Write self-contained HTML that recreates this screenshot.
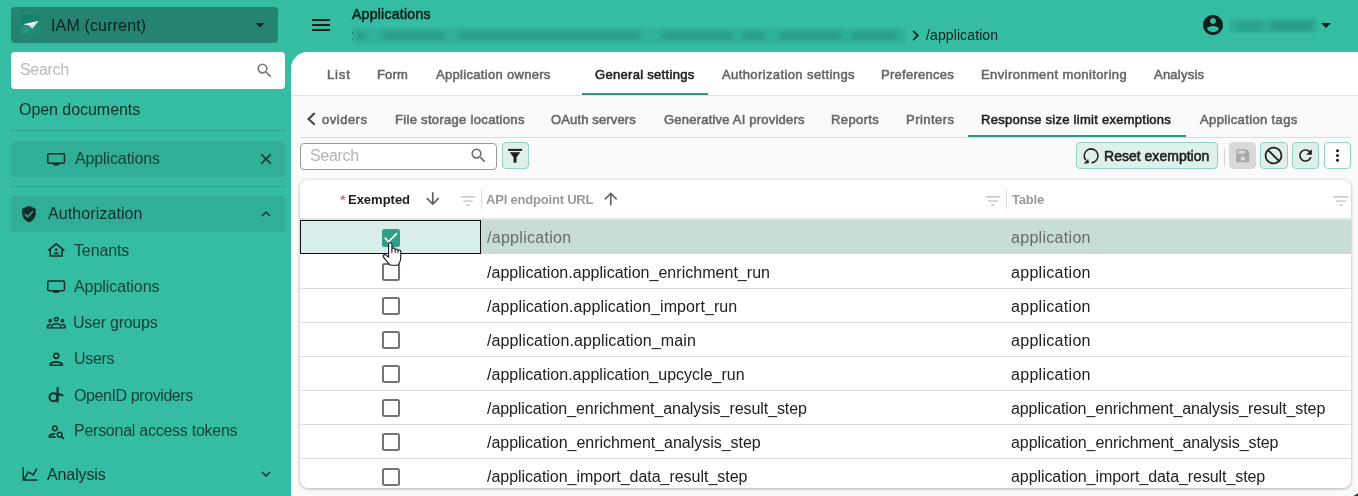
<!DOCTYPE html>
<html><head><meta charset="utf-8"><title>Applications</title>
<style>
html,body{margin:0;padding:0}
body{width:1358px;height:496px;overflow:hidden;position:relative;background:#35bda4;font-family:"Liberation Sans", sans-serif}
.t{position:absolute;white-space:pre;font-family:"Liberation Sans", sans-serif;will-change:transform}
.i{position:absolute;display:block}
.abs{position:absolute}
.iam{position:absolute;left:11px;top:7px;width:267px;height:36px;border-radius:4px;background:#248471}
.sb{position:absolute;left:11px;top:52px;width:274px;height:37px;border-radius:4px;background:#fff}
.dv{position:absolute;left:11px;width:274px;height:1px;background:#2ea08b}
.hl{position:absolute;left:11px;width:274px;background:#30ae98}
.main{position:absolute;left:291px;top:52px;width:1067px;height:444px;background:#fafafa;border-top-left-radius:17px;overflow:hidden}
.tabs{position:absolute;left:0;top:0;width:100%;height:43px;background:#fff;border-bottom:1px solid #e2e2e2}
.ul{position:absolute;height:2px;background:#2a9a85}
.card{position:absolute;left:300px;top:180px;width:1051px;height:308px;background:#fff;border-radius:8px;box-shadow:0 1px 3px rgba(0,0,0,.24),0 0 4px rgba(0,0,0,.1);overflow:hidden}
.rb{position:absolute;left:0;width:100%;height:1px;background:#dedede}
.cb{position:absolute;left:382px;width:14px;height:14px;border:2px solid #747474;border-radius:2.500px;background:#fff}
.btn{position:absolute;top:142.100px;height:24.700px;border:1px solid #8fd1c3;border-radius:4px;background:#dff0ec}
</style></head><body>
<div class="iam"></div>
<svg class="i" style="left:21.300px;top:15.200px" width="19.200" height="19.200" viewBox="0 0 19.200 19.200"><defs><linearGradient id="lg" x1="0" y1="0" x2="0.300" y2="1"><stop offset="0" stop-color="#117c6b"/><stop offset="1" stop-color="#1b8f7e"/></linearGradient></defs><rect width="19.200" height="19.200" rx="1.500" fill="url(#lg)"/><path d="M0 10.800 0 17.700Q0 19.200 1.500 19.200L3 19.200 12.600 12.200 8.200 10.600z" fill="#fff" fill-opacity=".07"/><path d="M2.400 9.200 17.400 6 11.300 13.400 8.200 10.600z" fill="#fff"/><path d="M8.200 10.600 17.400 6 11.300 13.400z" fill="#dcdfdf"/><path d="M2.400 9.200 8.200 10.600 9.500 9.700z" fill="#e6d6d6"/></svg>
<div class="sb"></div>
<div class="dv" style="top:130px"></div>
<div class="hl" style="top:141px;height:36px;border-radius:4px"></div>
<div class="dv" style="top:186px"></div>
<div class="hl" style="top:196px;height:35.500px;border-radius:4px 4px 0 0"></div>
<div class="abs" style="left:352.800px;top:25.500px;width:553.200px;height:20px;overflow:hidden"><div class="abs" style="left:-8px;top:2px;width:570px;height:16px;background:#30b19a;filter:blur(1.500px)"></div><div class="abs" style="left:4.2px;top:6.500px;width:8px;height:7px;background:#279a85;filter:blur(2.500px)"></div><div class="abs" style="left:30.2px;top:6.500px;width:62px;height:7px;background:#279a85;filter:blur(2.500px)"></div><div class="abs" style="left:105.2px;top:6.500px;width:182px;height:7px;background:#279a85;filter:blur(2.500px)"></div><div class="abs" style="left:309.2px;top:6.500px;width:71px;height:7px;background:#279a85;filter:blur(2.500px)"></div><div class="abs" style="left:390.2px;top:6.500px;width:22px;height:7px;background:#279a85;filter:blur(2.500px)"></div><div class="abs" style="left:426.2px;top:6.500px;width:63px;height:7px;background:#279a85;filter:blur(2.500px)"></div><div class="abs" style="left:498.2px;top:6.500px;width:46px;height:7px;background:#279a85;filter:blur(2.500px)"></div></div>
<div class="abs" style="left:352px;top:32px;width:1.200px;height:1.600px;background:#1f6b5c"></div><div class="abs" style="left:352px;top:37.500px;width:1.200px;height:1.600px;background:#1f6b5c"></div>
<div class="abs" style="left:1229px;top:17px;width:87.500px;height:17px;overflow:hidden"><div class="abs" style="left:-8px;top:2px;width:104px;height:13px;background:#30b19a;filter:blur(1.500px)"></div><div class="abs" style="left:5px;top:3.500px;width:30px;height:10px;background:#2ba38d;filter:blur(2.500px)"></div><div class="abs" style="left:41px;top:3.500px;width:42px;height:10px;background:#289b86;filter:blur(2.500px)"></div></div>
<div class="main">
  <div class="tabs"></div>
</div>
<div class="ul" style="left:582px;top:93px;width:126px"></div>
<div class="abs" style="left:300px;top:137px;width:1051px;height:1px;background:#dcdcdc"></div>
<div class="ul" style="left:968px;top:135px;width:218px"></div>
<div class="abs" style="left:300px;top:143px;width:195px;height:25px;border:1px solid #999;border-radius:4px;background:#fff"></div>
<div class="btn" style="left:502px;width:25px"></div>
<div class="btn" style="left:1076px;width:139.500px"></div>
<div class="abs" style="left:1223.500px;top:148px;width:1px;height:18px;background:#d4d4d4"></div>
<div class="btn" style="left:1229.300px;width:24.500px;background:#d9d9d9;border-color:#d9d9d9"></div>
<div class="btn" style="left:1260.100px;width:25.500px"></div>
<div class="btn" style="left:1292.300px;width:25px"></div>
<div class="btn" style="left:1324.300px;width:24.500px;background:#fff"></div>
<div class="card">
  <div class="abs" style="left:0;top:38px;width:100%;height:2.300px;background:#e4e4e4"></div>
  <div class="abs" style="left:0;top:40.300px;width:100%;height:33.900px;background:#c8ddd7"></div>
  <div class="abs" style="left:0;top:40.300px;width:179px;height:31.900px;background:#d9eeea;border:1px solid #111"></div>
  <div class="abs" style="left:181px;top:9px;width:1px;height:20px;background:#dcdcdc"></div>
  <div class="abs" style="left:706px;top:9px;width:1px;height:20px;background:#dcdcdc"></div>
  <div class="rb" style="top:107.8px"></div><div class="rb" style="top:141.9px"></div><div class="rb" style="top:176.0px"></div><div class="rb" style="top:210.1px"></div><div class="rb" style="top:244.1px"></div><div class="rb" style="top:278.2px"></div><div class="rb" style="top:312.3px"></div>
</div>
<div class="cb" style="top:263.1px"></div><div class="cb" style="top:297.2px"></div><div class="cb" style="top:331.2px"></div><div class="cb" style="top:365.4px"></div><div class="cb" style="top:399.4px"></div><div class="cb" style="top:433.4px"></div><div class="cb" style="top:467.6px"></div>
<div class="abs" style="left:382px;top:229px;width:18px;height:18px;border-radius:2.500px;background:#2f9f88"></div>
<svg class="i" style="left:382px;top:229px" width="18" height="18" viewBox="0 0 18 18"><path d="M2.700 8.700 6.600 12.600 15.100 4.200" fill="none" stroke="#fff" stroke-width="1.700"/></svg>
<svg class="i" style="left:250.2px;top:14.8px" width="20" height="20" viewBox="0 0 24 24" fill="#0b1f1b" ><path d="M7 10l5 5 5-5z"/></svg><svg class="i" style="left:255px;top:60.5px" width="19" height="19" viewBox="0 0 24 24" fill="#7a7a7a" ><path d="M15.5 14h-.79l-.28-.27A6.471 6.471 0 0 0 16 9.5 6.5 6.5 0 1 0 9.5 16c1.61 0 3.09-.59 4.23-1.57l.27.28v.79l5 4.99L20.49 19l-4.99-5zm-6 0C7.01 14 5 11.99 5 9.5S7.01 5 9.5 5 14 7.01 14 9.5 11.99 14 9.5 14z"/></svg><svg class="i" style="left:44px;top:147px" width="24" height="24" viewBox="44 147 24 24"><rect x="47.750" y="153.75" width="16.700" height="9.600" rx="1.300" fill="none" stroke="#0f2e28" stroke-width="1.500"/><rect x="53.300" y="163.60" width="5.800" height="1.900" fill="#0f2e28"/></svg><svg class="i" style="left:257px;top:150px" width="18" height="18" viewBox="0 0 24 24" fill="#0f2e28" ><path d="M19 6.41L17.59 5 12 10.59 6.41 5 5 6.41 10.59 12 5 17.59 6.41 19 12 13.41 17.59 19 19 17.59 13.41 12z"/></svg><svg class="i" style="left:20px;top:204.5px" width="18" height="18" viewBox="0 0 24 24" fill="#0f2e28" ><path d="M12 1L3 5v6c0 5.55 3.84 10.74 9 12 5.16-1.26 9-6.45 9-12V5l-9-4zm-2 16l-4-4 1.41-1.41L10 14.17l6.59-6.59L18 9l-8 8z"/></svg><svg class="i" style="left:257px;top:205px" width="18" height="18" viewBox="0 0 24 24" fill="#0f2e28" ><path d="M12 8l-6 6 1.41 1.41L12 10.83l4.59 4.58L18 14z"/></svg><svg class="i" style="left:44px;top:274px" width="24" height="24" viewBox="44 274 24 24"><rect x="47.750" y="281.05" width="16.700" height="9.600" rx="1.300" fill="none" stroke="#0f2e28" stroke-width="1.500"/><rect x="53.300" y="290.90" width="5.800" height="1.900" fill="#0f2e28"/></svg><svg class="i" style="left:44px;top:310px" width="24" height="24" viewBox="44 310 24 24"><g fill="none" stroke="#0f2e28" stroke-width="1.400"><circle cx="56.300" cy="319.300" r="1.800"/><circle cx="50.200" cy="320.700" r="1.150"/><circle cx="62.400" cy="320.700" r="1.150"/><path d="M51.700 327.900v-1.300c0-1.900 2.700-2.900 4.600-2.900s4.600 1 4.600 2.900v1.300z"/><path d="M51.700 327.900h-4.300v-1.200c0-1.300 1.500-2.200 3.400-2.200M60.900 327.900h4.300v-1.200c0-1.300-1.500-2.200-3.400-2.200"/></g></svg><svg class="i" style="left:46px;top:348.8px" width="20.5" height="20.5" viewBox="0 0 24 24" fill="#0f2e28" ><path d="M12 6c1.1 0 2 .9 2 2s-.9 2-2 2-2-.9-2-2 .9-2 2-2m0 10c2.7 0 5.8 1.29 6 2H6c.23-.72 3.31-2 6-2m0-12C9.79 4 8 5.79 8 8s1.79 4 4 4 4-1.79 4-4-1.79-4-4-4zm0 10c-2.67 0-8 1.34-8 4v2h16v-2c0-2.66-5.33-4-8-4z"/></svg><svg class="i" style="left:46.5px;top:422px" width="19" height="19" viewBox="0 0 24 24" fill="#0f2e28" ><path d="M10 12c2.21 0 4-1.79 4-4s-1.79-4-4-4-4 1.79-4 4 1.79 4 4 4zm0-6c1.1 0 2 .9 2 2s-.9 2-2 2-2-.9-2-2 .9-2 2-2zM4 18c.22-.72 3.31-2 6-2 0-.7.13-1.37.35-1.99C7.62 13.91 2 15.27 2 18v2h9.54c-.52-.58-.93-1.25-1.19-2H4zm15.43.02c.36-.59.57-1.28.57-2.02 0-2.21-1.79-4-4-4s-4 1.79-4 4 1.79 4 4 4c.74 0 1.43-.22 2.02-.57L20.59 22 22 20.59c-1.5-1.5-.79-.8-2.57-2.57zM16 18c-1.1 0-2-.9-2-2s.9-2 2-2 2 .9 2 2-.9 2-2 2z"/></svg><svg class="i" style="left:20.5px;top:464.5px" width="18" height="18" viewBox="0 0 24 24" fill="#0f2e28" ><path d="M16,11.78L20.24,4.45L21.97,5.45L16.74,14.5L10.23,10.75L5.46,19H22V21H2V3H4V17.54L9.5,8L16,11.78Z"/></svg><svg class="i" style="left:257px;top:465px" width="18" height="18" viewBox="0 0 24 24" fill="#0f2e28" ><path d="M16.59 8.59L12 13.17 7.41 8.59 6 10l6 6 6-6z"/></svg><svg class="i" style="left:44px;top:238px" width="24" height="24" viewBox="44 238 24 24"><g fill="none" stroke="#0f2e28" stroke-width="1.500"><path d="M48 250.600 56.200 243.800 64.400 250.600M50.300 249v6.900h11.800v-6.900"/></g><circle cx="56.200" cy="249.700" r="1.350" fill="#0f2e28"/><path d="M53.600 254.200c0-1.500 1.500-2 2.600-2s2.600.5 2.600 2z" fill="#0f2e28"/></svg><svg class="i" style="left:44px;top:383px" width="24" height="24" viewBox="44 383 24 24"><g fill="none" stroke="#0f2e28" stroke-width="2"><circle cx="53.500" cy="397.300" r="4"/><path d="M57.600 387.300v15.100M58.300 394l5 1.600" stroke-width="2.100"/></g></svg><svg class="i" style="left:309px;top:13px" width="24" height="24" viewBox="0 0 24 24" fill="#0b1f1b" ><path d="M3 18h18v-2H3v2zm0-5h18v-2H3v2zm0-7v2h18V6H3z"/></svg><svg class="i" style="left:1201px;top:13px" width="24" height="24" viewBox="0 0 24 24" fill="#0b1f1b" ><path d="M12 2C6.48 2 2 6.48 2 12s4.48 10 10 10 10-4.48 10-10S17.52 2 12 2zm0 3c1.66 0 3 1.34 3 3s-1.34 3-3 3-3-1.34-3-3 1.34-3 3-3zm0 14.2c-2.5 0-4.71-1.28-6-3.22.03-1.99 4-3.08 6-3.08 1.99 0 5.97 1.09 6 3.08-1.29 1.94-3.5 3.22-6 3.22z"/></svg><svg class="i" style="left:1314px;top:13px" width="24" height="24" viewBox="0 0 24 24" fill="#0b1f1b" ><path d="M7 10l5 5 5-5z"/></svg><svg class="i" style="left:905px;top:25px" width="21" height="21" viewBox="0 0 24 24" fill="#0b1f1b" ><path d="M10 6L8.59 7.41 13.17 12l-4.58 4.59L10 18l6-6z"/></svg><svg class="i" style="left:304px;top:110px" width="16" height="18" viewBox="304 110 16 18"><path d="M314.700 113.100 308.600 118.900 314.700 124.700" fill="none" stroke="#444" stroke-width="2.100"/></svg><svg class="i" style="left:468.5px;top:146.1px" width="19" height="19" viewBox="0 0 24 24" fill="#6e6e6e" ><path d="M15.5 14h-.79l-.28-.27A6.471 6.471 0 0 0 16 9.5 6.5 6.5 0 1 0 9.5 16c1.61 0 3.09-.59 4.23-1.57l.27.28v.79l5 4.99L20.49 19l-4.99-5zm-6 0C7.01 14 5 11.99 5 9.5S7.01 5 9.5 5 14 7.01 14 9.5 11.99 14 9.5 14z"/></svg><svg class="i" style="left:504px;top:144px" width="24" height="24" viewBox="504 144 24 24"><rect x="508.100" y="148.900" width="14" height="2" fill="#1d1d1d"/><path d="M509.700 152.200H520.300L516.500 157.300V162.700H513.600V157.300Z" fill="#1d1d1d"/></svg><svg class="i" style="left:1233.5px;top:147px" width="17.5" height="17.5" viewBox="0 0 24 24" fill="#a9a9a9" ><path d="M17 3H5c-1.11 0-2 .9-2 2v14c0 1.1.89 2 2 2h14c1.1 0 2-.9 2-2V7l-4-4zm-5 16c-1.66 0-3-1.34-3-3s1.34-3 3-3 3 1.34 3 3-1.34 3-3 3zm3-10H5V5h10v4z"/></svg><svg class="i" style="left:1263.3px;top:145.3px" width="21" height="21" viewBox="0 0 24 24" fill="#1d1d1d" transform="scale(-1 1)"><path d="M12 2C6.48 2 2 6.48 2 12s4.48 10 10 10 10-4.48 10-10S17.52 2 12 2zM4 12c0-4.42 3.58-8 8-8 1.85 0 3.55.63 4.9 1.69L5.69 16.9C4.63 15.55 4 13.85 4 12zm8 8c-1.85 0-3.55-.63-4.9-1.69L18.31 7.1C19.37 8.45 20 10.15 20 12c0 4.42-3.58 8-8 8z"/></svg><svg class="i" style="left:1296.3px;top:146.3px" width="19" height="19" viewBox="0 0 24 24" fill="#1d1d1d" ><path d="M17.65 6.35C16.2 4.9 14.21 4 12 4c-4.42 0-7.99 3.58-7.99 8s3.57 8 7.99 8c3.73 0 6.84-2.55 7.73-6h-2.08c-.82 2.33-3.04 4-5.65 4-3.31 0-6-2.69-6-6s2.69-6 6-6c1.66 0 3.14.69 4.22 1.78L13 11h7V4l-2.35 2.35z"/></svg><svg class="i" style="left:1328px;top:146.3px" width="19" height="19" viewBox="0 0 24 24" fill="#1d1d1d" ><path d="M12 8c1.1 0 2-.9 2-2s-.9-2-2-2-2 .9-2 2 .9 2 2 2zm0 2c-1.1 0-2 .9-2 2s.9 2 2 2 2-.9 2-2-.9-2-2-2zm0 6c-1.1 0-2 .9-2 2s.9 2 2 2 2-.9 2-2-.9-2-2-2z"/></svg><svg class="i" style="left:1080px;top:144px" width="24" height="24" viewBox="1080 144 24 24"><path d="M1091.500 162.700A6.900 6.900 0 1 0 1085.800 160.200" fill="none" stroke="#1d1d1d" stroke-width="1.500"/><path d="M1083.600 163.700 1088.900 163.100 1088.300 158.700z" fill="#1d1d1d"/></svg><svg class="i" style="left:423.2px;top:188.9px" width="19.5" height="19.5" viewBox="0 0 24 24" fill="#5e5e5e" ><path d="M20 12l-1.41-1.41L13 16.17V4h-2v12.17l-5.58-5.59L4 12l8 8 8-8z"/></svg><svg class="i" style="left:457.85px;top:190.65px" width="20" height="20" viewBox="0 0 24 24" fill="#cdcdcd" ><path d="M10 18h4v-2h-4v2zM3 6v2h18V6H3zm3 7h12v-2H6v2z"/></svg><svg class="i" style="left:600.5px;top:189.2px" width="19.5" height="19.5" viewBox="0 0 24 24" fill="#5e5e5e" ><path d="M4 12l1.41 1.41L11 7.83V20h2V7.83l5.58 5.59L20 12l-8-8-8 8z"/></svg><svg class="i" style="left:983.4px;top:190.65px" width="20" height="20" viewBox="0 0 24 24" fill="#cdcdcd" ><path d="M10 18h4v-2h-4v2zM3 6v2h18V6H3zm3 7h12v-2H6v2z"/></svg><svg class="i" style="left:1331.2px;top:190.65px" width="20" height="20" viewBox="0 0 24 24" fill="#cdcdcd" ><path d="M10 18h4v-2h-4v2zM3 6v2h18V6H3zm3 7h12v-2H6v2z"/></svg>
<span class="t" style="left:50.90px;top:16.26px;font-size:16px;line-height:20px;letter-spacing:0.150px;color:#0b1f1b">IAM (current)</span>
<span class="t" style="left:20.00px;top:60.06px;font-size:16px;line-height:20px;letter-spacing:-0.300px;color:#b9b9b9">Search</span>
<span class="t" style="left:19.30px;top:100.16px;font-size:16px;line-height:20px;letter-spacing:-0.046px;color:#0f2e28">Open documents</span>
<span class="t" style="left:74.70px;top:149.46px;font-size:16px;line-height:20px;letter-spacing:-0.118px;color:#163e36">Applications</span>
<span class="t" style="left:47.50px;top:204.46px;font-size:16px;line-height:20px;letter-spacing:0.092px;color:#0f2e28">Authorization</span>
<span class="t" style="left:74.10px;top:240.76px;font-size:16px;line-height:20px;letter-spacing:-0.133px;color:#163e36">Tenants</span>
<span class="t" style="left:74.10px;top:277.06px;font-size:16px;line-height:20px;letter-spacing:-0.073px;color:#163e36">Applications</span>
<span class="t" style="left:73.10px;top:312.86px;font-size:16px;line-height:20px;letter-spacing:-0.250px;color:#163e36">User groups</span>
<span class="t" style="left:73.50px;top:348.96px;font-size:16px;line-height:20px;letter-spacing:-0.325px;color:#163e36">Users</span>
<span class="t" style="left:73.50px;top:385.76px;font-size:16px;line-height:20px;letter-spacing:-0.407px;color:#163e36">OpenID providers</span>
<span class="t" style="left:73.50px;top:421.36px;font-size:16px;line-height:20px;letter-spacing:-0.257px;color:#163e36">Personal access tokens</span>
<span class="t" style="left:47.10px;top:464.76px;font-size:16px;line-height:20px;letter-spacing:-0.114px;color:#0f2e28">Analysis</span>
<span class="t" style="left:352.07px;top:4.95px;font-size:14px;line-height:18px;letter-spacing:0.268px;color:#0b1f1b;-webkit-text-stroke:0.55px #0b1f1b">Applications</span>
<span class="t" style="left:925.80px;top:25.95px;font-size:14px;line-height:18px;letter-spacing:0.109px;color:#0b1f1b">/application</span>
<span class="t" style="left:326.77px;top:65.90px;font-size:13px;line-height:17px;letter-spacing:0.850px;color:#666666;-webkit-text-stroke:0.55px #666666">List</span>
<span class="t" style="left:376.67px;top:65.90px;font-size:13px;line-height:17px;letter-spacing:0.183px;color:#666666;-webkit-text-stroke:0.55px #666666">Form</span>
<span class="t" style="left:435.88px;top:65.90px;font-size:13px;line-height:17px;letter-spacing:0.309px;color:#666666;-webkit-text-stroke:0.55px #666666">Application owners</span>
<span class="t" style="left:595.17px;top:65.90px;font-size:13px;line-height:17px;letter-spacing:0.303px;color:#212121;-webkit-text-stroke:0.55px #212121">General settings</span>
<span class="t" style="left:721.88px;top:65.90px;font-size:13px;line-height:17px;letter-spacing:0.393px;color:#666666;-webkit-text-stroke:0.55px #666666">Authorization settings</span>
<span class="t" style="left:881.27px;top:65.90px;font-size:13px;line-height:17px;letter-spacing:0.275px;color:#666666;-webkit-text-stroke:0.55px #666666">Preferences</span>
<span class="t" style="left:981.48px;top:65.90px;font-size:13px;line-height:17px;letter-spacing:0.402px;color:#666666;-webkit-text-stroke:0.55px #666666">Environment monitoring</span>
<span class="t" style="left:1154.28px;top:65.90px;font-size:13px;line-height:17px;letter-spacing:0.236px;color:#666666;-webkit-text-stroke:0.55px #666666">Analysis</span>
<span class="t" style="left:321.97px;top:110.70px;font-size:13px;line-height:17px;letter-spacing:0.508px;color:#666666;-webkit-text-stroke:0.55px #666666">oviders</span>
<span class="t" style="left:394.88px;top:110.70px;font-size:13px;line-height:17px;letter-spacing:0.312px;color:#666666;-webkit-text-stroke:0.55px #666666">File storage locations</span>
<span class="t" style="left:551.38px;top:110.70px;font-size:13px;line-height:17px;letter-spacing:0.137px;color:#666666;-webkit-text-stroke:0.55px #666666">OAuth servers</span>
<span class="t" style="left:664.07px;top:110.70px;font-size:13px;line-height:17px;letter-spacing:0.211px;color:#666666;-webkit-text-stroke:0.55px #666666">Generative AI providers</span>
<span class="t" style="left:831.38px;top:110.70px;font-size:13px;line-height:17px;letter-spacing:0.392px;color:#666666;-webkit-text-stroke:0.55px #666666">Reports</span>
<span class="t" style="left:905.88px;top:110.70px;font-size:13px;line-height:17px;letter-spacing:0.464px;color:#666666;-webkit-text-stroke:0.55px #666666">Printers</span>
<span class="t" style="left:981.27px;top:110.70px;font-size:13px;line-height:17px;letter-spacing:0.267px;color:#212121;-webkit-text-stroke:0.55px #212121">Response size limit exemptions</span>
<span class="t" style="left:1199.88px;top:110.70px;font-size:13px;line-height:17px;letter-spacing:0.363px;color:#666666;-webkit-text-stroke:0.55px #666666">Application tags</span>
<span class="t" style="left:310.00px;top:146.16px;font-size:16px;line-height:20px;letter-spacing:-0.300px;color:#b4b4b4">Search</span>
<span class="t" style="left:1103.68px;top:146.95px;font-size:14px;line-height:18px;letter-spacing:0.018px;color:#1d1d1d;-webkit-text-stroke:0.55px #1d1d1d">Reset exemption</span>
<span class="t" style="left:339.90px;top:190.30px;font-size:15px;line-height:19px;letter-spacing:0.000px;color:#e53935">*</span>
<span class="t" style="left:348.10px;top:190.60px;font-size:13px;line-height:17px;letter-spacing:-0.014px;color:#1d1d1d;font-weight:bold">Exempted</span>
<span class="t" style="left:486.20px;top:190.60px;font-size:13px;line-height:17px;letter-spacing:-0.200px;color:#9a9a9a;font-weight:bold">API endpoint URL</span>
<span class="t" style="left:1012.40px;top:190.60px;font-size:13px;line-height:17px;letter-spacing:-0.200px;color:#9a9a9a;font-weight:bold">Table</span>
<span class="t" style="left:487.00px;top:228.16px;font-size:16px;line-height:20px;letter-spacing:0.291px;color:#666c6a">/application</span>
<span class="t" style="left:1011.40px;top:228.16px;font-size:16px;line-height:20px;letter-spacing:0.300px;color:#666c6a">application</span>
<span class="t" style="left:487.00px;top:262.76px;font-size:16px;line-height:20px;letter-spacing:0.026px;color:#212121">/application.application_enrichment_run</span>
<span class="t" style="left:1011.40px;top:262.76px;font-size:16px;line-height:20px;letter-spacing:0.300px;color:#212121">application</span>
<span class="t" style="left:487.00px;top:296.96px;font-size:16px;line-height:20px;letter-spacing:0.088px;color:#212121">/application.application_import_run</span>
<span class="t" style="left:1011.40px;top:296.96px;font-size:16px;line-height:20px;letter-spacing:0.300px;color:#212121">application</span>
<span class="t" style="left:487.00px;top:331.06px;font-size:16px;line-height:20px;letter-spacing:0.121px;color:#212121">/application.application_main</span>
<span class="t" style="left:1011.40px;top:331.06px;font-size:16px;line-height:20px;letter-spacing:0.300px;color:#212121">application</span>
<span class="t" style="left:487.00px;top:365.16px;font-size:16px;line-height:20px;letter-spacing:0.017px;color:#212121">/application.application_upcycle_run</span>
<span class="t" style="left:1011.40px;top:365.16px;font-size:16px;line-height:20px;letter-spacing:0.300px;color:#212121">application</span>
<span class="t" style="left:487.00px;top:399.26px;font-size:16px;line-height:20px;letter-spacing:-0.067px;color:#212121">/application_enrichment_analysis_result_step</span>
<span class="t" style="left:1011.40px;top:399.26px;font-size:16px;line-height:20px;letter-spacing:-0.098px;color:#212121">application_enrichment_analysis_result_step</span>
<span class="t" style="left:487.00px;top:433.46px;font-size:16px;line-height:20px;letter-spacing:-0.033px;color:#212121">/application_enrichment_analysis_step</span>
<span class="t" style="left:1011.40px;top:433.46px;font-size:16px;line-height:20px;letter-spacing:-0.083px;color:#212121">application_enrichment_analysis_step</span>
<span class="t" style="left:487.00px;top:467.26px;font-size:16px;line-height:20px;letter-spacing:-0.031px;color:#212121">/application_import_data_result_step</span>
<span class="t" style="left:1011.40px;top:467.26px;font-size:16px;line-height:20px;letter-spacing:-0.082px;color:#212121">application_import_data_result_step</span>
<svg class="i" style="left:380px;top:240px" width="24" height="28" viewBox="380 240 24 28"><path d="M388.600 244.100C388.600 242.300 391.900 242.300 391.900 244.100L391.900 249.300C392.300 247.400 395.100 247.400 395.200 249.300L395.200 250.200C395.500 248.500 397.900 248.500 398 250.200L398 251.200C398.300 249.600 400.700 249.600 400.800 251.600L400.800 257.500C400.800 261 399.600 262.600 398.600 264.200C398.300 264.900 397.900 265.300 397.200 265.300L391.200 265.300C390.400 265.300 389.900 265 389.400 264.300C387.600 261.900 385 259.600 383.400 256.900C382.600 255.300 384.200 254.100 385.700 254.900L388.600 257.200Z" fill="#fff" stroke="#15152a" stroke-width="1.100" stroke-linejoin="round"/><path d="M391.900 249.300V253.200M395.200 250.200V253.200M398 251.200V253.200" stroke="#15152a" stroke-width="1" fill="none"/></svg>
<svg class="i" style="left:1350px;top:490px" width="8" height="6" viewBox="0 0 8 6"><path d="M3.500 6 8 3.300V6z" fill="#1d3558"/></svg>
</body></html>
